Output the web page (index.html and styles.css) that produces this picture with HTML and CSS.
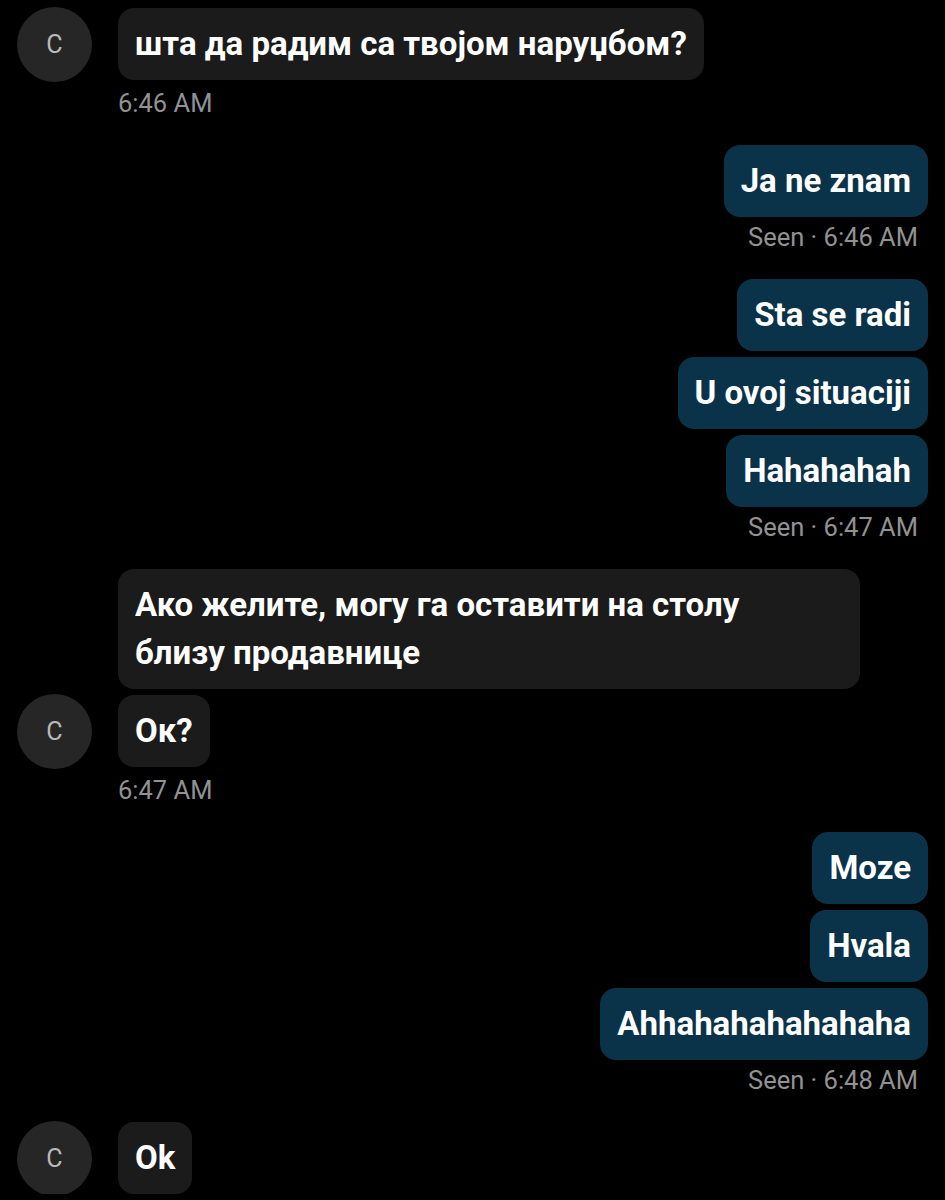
FILE: index.html
```html
<!DOCTYPE html>
<html>
<head>
    <meta charset="utf-8">
    <link rel="stylesheet" href="styles.css">
</head>
<body>
<div class="chat">
    <!-- incoming -->
    <div class="group in">
        <div class="row">
            <div class="avatar">C</div>
            <div class="bubble">шта да радим са твојом наруџбом?</div>
        </div>
        <div class="stamp">6:46 AM</div>
    </div>

    <!-- outgoing -->
    <div class="group out">
        <div class="row"><div class="bubble">Ja ne znam</div></div>
        <div class="stamp">Seen · 6:46 AM</div>
    </div>

    <div class="group out">
        <div class="row"><div class="bubble">Sta se radi</div></div>
        <div class="row"><div class="bubble">U ovoj situaciji</div></div>
        <div class="row"><div class="bubble">Hahahahah</div></div>
        <div class="stamp">Seen · 6:47 AM</div>
    </div>

    <div class="group in">
        <div class="row">
            <div class="avatar empty"></div>
            <div class="bubble wide">Ако желите, могу га оставити на столу близу продавнице</div>
        </div>
        <div class="row">
            <div class="avatar">C</div>
            <div class="bubble">Ок?</div>
        </div>
        <div class="stamp">6:47 AM</div>
    </div>

    <div class="group out">
        <div class="row"><div class="bubble">Moze</div></div>
        <div class="row"><div class="bubble">Hvala</div></div>
        <div class="row"><div class="bubble">Ahhahahahahahaha</div></div>
        <div class="stamp">Seen · 6:48 AM</div>
    </div>

    <div class="group in">
        <div class="row">
            <div class="avatar">C</div>
            <div class="bubble">Ok</div>
        </div>
    </div>
</div>
</body>
</html>
```

FILE: styles.css
```css
body {
    margin: 0;
    background: #000;
    font-family: Roboto, 'Noto Sans', sans-serif;
    color: #fff;
}

.chat {
    display: flex;
    flex-direction: column;
    gap: 28px;
    padding: 8px 17px 0;
}

.group {
    display: flex;
    flex-direction: column;
    gap: 6px;
}
.group.out {
    align-items: flex-end;
}

.row {
    display: flex;
    align-items: center;
    gap: 26px;
}

.avatar {
    width: 75px;
    height: 75px;
    margin: -2px 0;
    flex: none;
    border-radius: 50%;
    background: #262626;
    color: #b8b8b8;
    font-size: 25px;
    display: flex;
    align-items: center;
    justify-content: center;
}
.avatar.empty {
    background: none;
}

/* Bubbles */
.bubble {
    padding: 12px 17px;
    font-size: 33px;
    font-weight: 700;
    line-height: 48px;
    border-radius: 16px;
    background: #1b1b1b;
}
.bubble.wide {
    width: 742px;
    padding-right: 30px;
    box-sizing: border-box;
}
.out .bubble {
    background: #0a3249;
}

.stamp {
    font-size: 25.5px;
    line-height: 28px;
    color: #929292;
}
.in .stamp {
    margin-top: 3px;
    margin-left: 101px;
}
.out .stamp {
    margin-top: 0;
    margin-right: 10px;
}
```
